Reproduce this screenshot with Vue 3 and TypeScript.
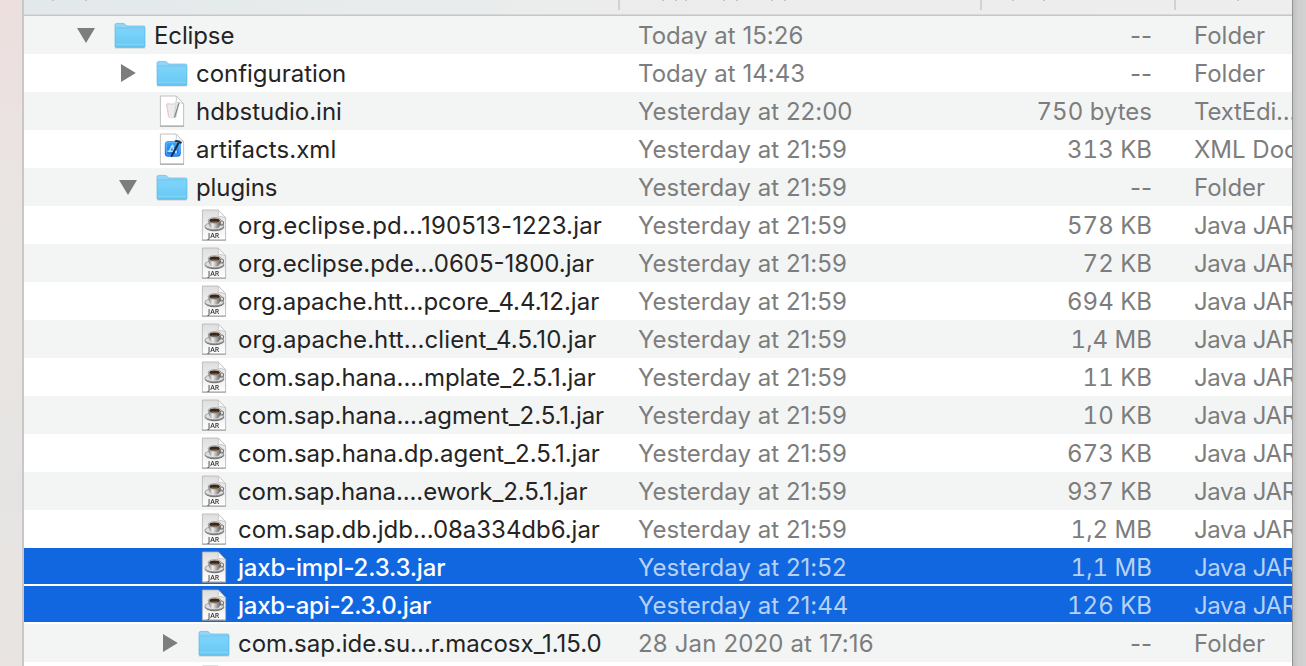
<script setup lang="ts">
interface FileRow {
  name: string
  kind: string
  icon: 'folder' | 'text' | 'xml' | 'jar'
  level: number
  date: string
  size: string
  tracking?: number
  arrow?: 'open' | 'closed'
  selected?: boolean
}

const jar = (name: string, size: string, tracking = 0, date = 'Yesterday at 21:59', selected = false): FileRow => ({
  name, size, date, selected, tracking, kind: 'Java JAR file', icon: 'jar', level: 3,
})

const rows: FileRow[] = [
  { name: 'Eclipse', kind: 'Folder', icon: 'folder', level: 1, date: 'Today at 15:26', size: '--', arrow: 'open', tracking: -0.12 },
  { name: 'configuration', kind: 'Folder', icon: 'folder', level: 2, date: 'Today at 14:43', size: '--', arrow: 'closed', tracking: -0.03 },
  { name: 'hdbstudio.ini', kind: 'TextEdi...', icon: 'text', level: 2, date: 'Yesterday at 22:00', size: '750 bytes' },
  { name: 'artifacts.xml', kind: 'XML Document', icon: 'xml', level: 2, date: 'Yesterday at 21:59', size: '313 KB', tracking: 0.07 },
  { name: 'plugins', kind: 'Folder', icon: 'folder', level: 2, date: 'Yesterday at 21:59', size: '--', arrow: 'open', tracking: -0.1 },
  jar('org.eclipse.pd...190513-1223.jar', '578 KB', 0.16),
  jar('org.eclipse.pde...0605-1800.jar', '72 KB'),
  jar('org.apache.htt...pcore_4.4.12.jar', '694 KB'),
  jar('org.apache.htt...client_4.5.10.jar', '1,4 MB', 0.07),
  jar('com.sap.hana....mplate_2.5.1.jar', '11 KB', -0.05),
  jar('com.sap.hana....agment_2.5.1.jar', '10 KB', -0.06),
  jar('com.sap.hana.dp.agent_2.5.1.jar', '673 KB', -0.02),
  jar('com.sap.hana....ework_2.5.1.jar', '937 KB', -0.1),
  jar('com.sap.db.jdb...08a334db6.jar', '1,2 MB', -0.03),
  jar('jaxb-impl-2.3.3.jar', '1,1 MB', -0.2, 'Yesterday at 21:52', true),
  jar('jaxb-api-2.3.0.jar', '126 KB', -0.25, 'Yesterday at 21:44', true),
  { name: 'com.sap.ide.su...r.macosx_1.15.0', kind: 'Folder', icon: 'folder', level: 3, date: '28 Jan 2020 at 17:16', size: '--', arrow: 'closed' },
  jar('', '', 0, ''),
]

const headerMarks = [28, 61, 638, 651, 661, 699, 712, 747, 760, 988, 1019, 1213]
</script>

<template>
  <div class="desktop">
    <svg class="defs" width="0" height="0" aria-hidden="true">
      <defs>
        <linearGradient id="folderFill" x2="0" y2="1">
          <stop offset="0" stop-color="#7dd4fa" />
          <stop offset="1" stop-color="#68c8f4" />
        </linearGradient>
        <linearGradient id="jarPaper" x2="0" y2="1">
          <stop offset="0" stop-color="#dedede" />
          <stop offset=".65" stop-color="#f3f3f3" />
          <stop offset="1" stop-color="#fff" />
        </linearGradient>
        <linearGradient id="xcodeFill" x2="0" y2="1">
          <stop offset="0" stop-color="#36aafa" />
          <stop offset="1" stop-color="#126ee9" />
        </linearGradient>
        <linearGradient id="cupFill" x2="1" y2="0">
          <stop offset="0" stop-color="#777" />
          <stop offset=".35" stop-color="#eee" />
          <stop offset="1" stop-color="#555" />
        </linearGradient>
      </defs>
    </svg>
    <main class="window">
      <header class="columns">
        <span class="col name-col"></span>
        <span class="col date-col"></span>
        <span class="col size-col"></span>
        <span class="col kind-col"></span>
        <svg class="marks" width="1268" height="1">
          <rect v-for="x in headerMarks" :key="x" :x="x" y="0" width="2" height="1" />
        </svg>
      </header>
      <div v-for="(row, i) in rows" :key="i" class="row" :class="{ selected: row.selected }">
        <div class="name-cell" :class="'level' + row.level">
          <span class="arrow-slot">
            <svg v-if="row.arrow" class="arrow" width="20" height="20" viewBox="0 0 20 20">
              <path v-if="row.arrow === 'open'" d="M1 3H19L10 18Z" />
              <path v-else d="M3 1V19L17.8 10Z" />
            </svg>
          </span>
          <span class="icon-slot">
            <svg v-if="row.icon === 'folder'" class="folder-icon" width="32" height="28" viewBox="0 0 32 28">
              <path d="M1 25.7H31" stroke="#9fa5a8" stroke-width="1.4" opacity=".6" />
              <path d="M1 3Q1 1.4 2.5 1.4H9Q10.5 1.4 11.4 2.7Q12.2 4 14 4H29.5Q31 4 31 5.5V24Q31 25.2 29.7 25.2H2.3Q1 25.2 1 24Z" fill="#8fd6f8" />
              <path d="M1 6.7H31V24Q31 25.2 29.7 25.2H2.3Q1 25.2 1 24Z" fill="url(#folderFill)" />
              <path d="M1.5 6H30.5" stroke="#58b4df" stroke-width=".6" />
              <path d="M1.5 22.3H30.5" stroke="#90dafb" stroke-width=".7" />
              <path d="M1 3Q1 1.4 2.5 1.4H9Q10.5 1.4 11.4 2.7Q12.2 4 14 4H29.5Q31 4 31 5.5V24Q31 25.2 29.7 25.2H2.3Q1 25.2 1 24Z" fill="none" stroke="#51b2df" stroke-width=".6" />
            </svg>
            <svg v-else class="document-icon" width="28" height="34" viewBox="0 0 28 34">
              <path d="M2.4 2H18.2L25.6 9.6V32H2.4Z" :fill="row.icon === 'jar' ? 'url(#jarPaper)' : '#fff'" stroke="#b2b2b2" stroke-width=".8" />
              <path d="M2 32.2H26" stroke="#999" stroke-width=".9" />
              <path d="M18.2 2Q19 7 17.6 8.7Q21 8 25.6 9.6Z" fill="#fafafa" stroke="#c2c2c2" stroke-width=".8" />
              <g v-if="row.icon === 'text'">
                <path d="M8.5 10H20L18.5 22.5Q13 25 10.5 23Z" fill="#ececed" stroke="#dad6d6" stroke-width=".8" />
                <path d="M8.5 10L10.8 22" stroke="#f0c8c5" stroke-width="1" />
                <path d="M9 9Q13 12 19 9" fill="none" stroke="#ddd" />
                <path d="M21 9L16.5 23.5" stroke="#7d8a94" stroke-width="1.3" />
                <path d="M18 11L16 22" stroke="#c5c5c5" stroke-width=".8" />
              </g>
              <g v-else-if="row.icon === 'xml'">
                <rect x="6.8" y="9" width="16" height="15.8" rx="3.5" fill="url(#xcodeFill)" />
                <rect x="8.4" y="10.6" width="12.8" height="12.4" rx="2" fill="none" stroke="#80c8ff" stroke-width=".6" />
                <path d="M15 12.5L10.8 20M12.6 14.5H16M9.5 19.2H19M14.7 15.5L18.5 21.5" fill="none" stroke="#bbdfff" stroke-width="1.5" />
                <path d="M20.8 10.5L13.2 24.8" stroke="#202833" stroke-width="1.9" />
                <path d="M17 9.4Q20.4 8.2 23.5 11.3" fill="none" stroke="#28313a" stroke-width="2" />
              </g>
              <g v-else>
                <ellipse cx="14.5" cy="19.2" rx="9.6" ry="4" fill="#777" />
                <ellipse cx="14.3" cy="18.2" rx="9.4" ry="3.6" fill="#ddd" stroke="#858585" stroke-width=".7" />
                <circle cx="21.6" cy="15" r="2" fill="none" stroke="#777" stroke-width="1.1" />
                <path d="M8.2 12.8H21Q20.5 19.6 17 20.6H12.3Q8.8 19.6 8.2 12.8Z" fill="url(#cupFill)" />
                <ellipse cx="14.6" cy="12.4" rx="6.4" ry="2.7" fill="#ddd" stroke="#777" stroke-width=".6" />
                <ellipse cx="14.6" cy="12.4" rx="5.2" ry="2" fill="#3b2612" />
                <path d="M11.5 13.3Q14.5 14.5 17.7 13.1" fill="none" stroke="#8a6335" stroke-width=".7" />
                <text x="13.7" y="30.3" text-anchor="middle" class="jar-label">JAR</text>
              </g>
            </svg>
          </span>
          <span class="name" :style="{ letterSpacing: (row.tracking ?? 0) + 'px' }">{{ row.name }}</span>
        </div>
        <div class="date" :class="{ long: row.date.startsWith('28') }">{{ row.date }}</div>
        <div class="size" :class="{ empty: row.size === '--' }">{{ row.size }}</div>
        <div class="kind" :class="'kind-' + row.icon">{{ row.name ? row.kind : '' }}</div>
      </div>
    </main>
  </div>
</template>

<style>
body { overflow: hidden; }
</style>

<style scoped>
.desktop {
  width: 1306px;
  height: 666px;
  box-sizing: border-box;
  padding-left: 22px;
  overflow: hidden;
  background: linear-gradient(90deg, transparent 1292px, #bcbcbc 1292px, #cfcfcf 1298px, #d2d2d2), linear-gradient(#ecdfde, #e9e5e3 35%, #e6e4e2 75%, #e9e4e2);
  font: 24px/40px Inter, "Liberation Sans", sans-serif;
}
.defs { display: block; width: 0; height: 0; }
.window {
  width: 1268px;
  height: 666px;
  overflow: hidden;
  background: #fff;
  border-left: 2px solid #cbc7c8;
  border-right: 1px solid #929292;
}
.columns {
  position: relative;
  display: flex;
  box-sizing: border-box;
  height: 16px;
  border-bottom: 1px solid #c6c6c6;
  box-shadow: inset 0 -1px #d9d9d9;
  background: linear-gradient(90deg, #e3e8eb, #e8ecec 30%, #ececec 45%, #eee);
}
.marks { position: absolute; left: 0; top: 0; fill: #c4c4c4; }
.col { box-sizing: border-box; height: 10px; border-right: 2px solid #d2d2d2; }
.name-col { width: 596px; }
.date-col { width: 362px; }
.size-col { width: 194px; }
.kind-col { flex: 1; border: 0; }
.row {
  display: grid;
  grid-template-columns: 614px 360px 154px 1fr;
  height: 38px;
  color: #7d7d7d;
  white-space: nowrap;
}
.row:nth-of-type(odd) { background: #f3f5f5; }
.row.selected {
  height: 36px;
  border-bottom: 2px solid #fff;
  background: #1167df;
  color: #b7d1f6;
}
.name-cell { display: flex; color: #242424; }
.level1 { padding-left: 52px; }
.level2 { padding-left: 94px; }
.level3 { padding-left: 136px; }
.arrow-slot { display: flex; width: 38px; height: 38px; align-items: center; }
.arrow { fill: #7d7d7d; }
.icon-slot { display: flex; width: 40px; height: 38px; align-items: center; }
.icon-slot svg { flex: none; }
.folder-icon { margin-top: 2px; }
.document-icon { margin-left: 2px; will-change: transform; }
.selected .name { color: #fff; font-weight: 500; }
.date { letter-spacing: .03px; }
.date.long { letter-spacing: .15px; }
.size { text-align: right; font-variant-numeric: tabular-nums; }
.size.empty { font-variant-numeric: normal; }
.kind { padding-left: 42px; overflow: hidden; }
.kind-jar { letter-spacing: -.35px; }
.kind-text { letter-spacing: -.2px; }
.jar-label { font: 600 7px "Open Sans", sans-serif; fill: #333; }
</style>
